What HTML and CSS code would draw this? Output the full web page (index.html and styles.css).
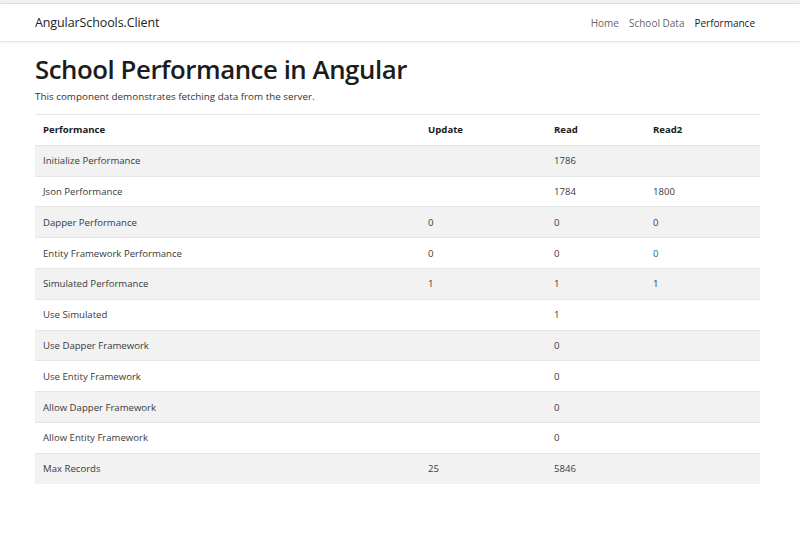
FILE: index.html
```html
<!DOCTYPE html>
<html>
<head>
<meta charset="utf-8">
<link rel="stylesheet" href="styles.css">
</head>
<body>
<div class="topstrip"></div>
<header class="navbar">
  <div class="nav-inner">
    <a class="brand">AngularSchools.Client</a>
    <nav class="links">
      <a class="link">Home</a>
      <a class="link">School Data</a>
      <a class="link active">Performance</a>
    </nav>
  </div>
</header>
<main class="container">
  <h1 class="title">School Performance in Angular</h1>
  <p class="lead">This component demonstrates fetching data from the server.</p>
  <table class="perf">
    <colgroup>
      <col class="c1"><col class="c2"><col class="c3"><col class="c4">
    </colgroup>
    <thead>
      <tr><th>Performance</th><th>Update</th><th>Read</th><th>Read2</th></tr>
    </thead>
    <tbody>
      <tr><td>Initialize Performance</td><td></td><td>1786</td><td></td></tr>
      <tr><td>Json Performance</td><td></td><td>1784</td><td>1800</td></tr>
      <tr><td>Dapper Performance</td><td>0</td><td>0</td><td>0</td></tr>
      <tr><td>Entity Framework Performance</td><td>0</td><td>0</td><td class="blue">0</td></tr>
      <tr><td>Simulated Performance</td><td>1</td><td>1</td><td>1</td></tr>
      <tr><td>Use Simulated</td><td></td><td>1</td><td></td></tr>
      <tr><td>Use Dapper Framework</td><td></td><td>0</td><td></td></tr>
      <tr><td>Use Entity Framework</td><td></td><td>0</td><td></td></tr>
      <tr><td>Allow Dapper Framework</td><td></td><td>0</td><td></td></tr>
      <tr><td>Allow Entity Framework</td><td></td><td>0</td><td></td></tr>
      <tr><td>Max Records</td><td>25</td><td>5846</td><td></td></tr>
    </tbody>
  </table>
</main>
</body>
</html>
```

FILE: styles.css
```css
* { box-sizing: border-box; }
html, body { margin: 0; padding: 0; background: #fff; }
body {
  font-family: "Open Sans", "Noto Sans", sans-serif;
  color: #212529;
}
.topstrip {
  height: 4px;
  background: #f0f0f0;
  border-bottom: 1px solid #e2e2e2;
}
.navbar {
  height: 38px;
  border-bottom: 1px solid #e5e5e5;
  box-shadow: 0 1px 3px rgba(0,0,0,0.06);
  display: flex;
  align-items: center;
}
.nav-inner {
  margin-left: 35px;
  width: 720px;
  display: flex;
  align-items: center;
  justify-content: space-between;
}
.brand {
  font-size: 12.5px;
  color: #222;
  letter-spacing: -0.1px;
}
.links { display: flex; gap: 10px; }
.link {
  font-size: 10px;
  color: #666;
}
.link.active { color: #222; }
.container {
  margin-left: 35px;
  width: 725px;
}
.title {
  margin: 11px 0 0;
  font-size: 25.8px;
  font-weight: 600;
  line-height: 32px;
  color: #1c1c1c;
  letter-spacing: -0.45px;
}
.lead {
  margin: 4px 0 0;
  font-size: 9.85px;
  line-height: 14px;
  color: #333;
}
.perf {
  margin-top: 11px;
  width: 100%;
  border-collapse: collapse;
  font-size: 9.6px;
  border-top: 1px solid #e6e6e6;
}
.c1 { width: 385px; }
.c2 { width: 126px; }
.c3 { width: 99px; }
.c4 { width: 115px; }
.perf th, .perf td {
  text-align: left;
  padding: 0 8px;
  height: 30.8px;
  border-bottom: 1px solid #e6e6e6;
  vertical-align: middle;
}
.perf th { font-weight: 700; color: #1a1a1a; }
.perf td { color: #3a3a3a; }
.perf tbody tr:nth-child(odd) { background: #f2f2f2; }
.perf tbody tr:last-child td { border-bottom: none; }
.perf td.blue { color: #2b5f8f; }
```
